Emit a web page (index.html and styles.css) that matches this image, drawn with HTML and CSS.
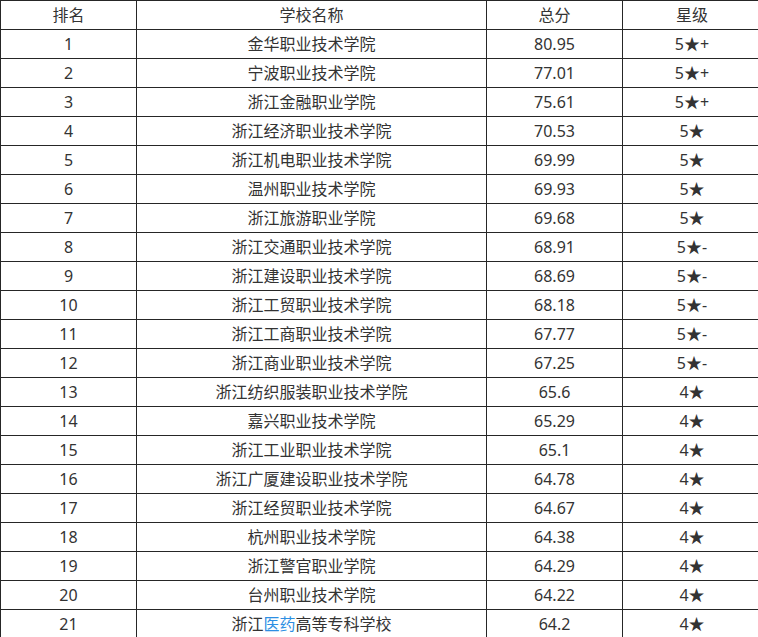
FILE: index.html
```html
<!DOCTYPE html>
<html lang="zh-CN">
<head>
<meta charset="utf-8">
<title>排名</title>
<link rel="stylesheet" href="styles.css">
</head>
<body>
<table class="rank-table">
  <colgroup>
    <col class="c-rank">
    <col class="c-name">
    <col class="c-score">
    <col class="c-star">
  </colgroup>
  <thead>
    <tr><th>排名</th><th>学校名称</th><th>总分</th><th>星级</th></tr>
  </thead>
  <tbody>
    <tr><td>1</td><td>金华职业技术学院</td><td>80.95</td><td>5★+</td></tr>
    <tr><td>2</td><td>宁波职业技术学院</td><td>77.01</td><td>5★+</td></tr>
    <tr><td>3</td><td>浙江金融职业学院</td><td>75.61</td><td>5★+</td></tr>
    <tr><td>4</td><td>浙江经济职业技术学院</td><td>70.53</td><td>5★</td></tr>
    <tr><td>5</td><td>浙江机电职业技术学院</td><td>69.99</td><td>5★</td></tr>
    <tr><td>6</td><td>温州职业技术学院</td><td>69.93</td><td>5★</td></tr>
    <tr><td>7</td><td>浙江旅游职业学院</td><td>69.68</td><td>5★</td></tr>
    <tr><td>8</td><td>浙江交通职业技术学院</td><td>68.91</td><td>5★-</td></tr>
    <tr><td>9</td><td>浙江建设职业技术学院</td><td>68.69</td><td>5★-</td></tr>
    <tr><td>10</td><td>浙江工贸职业技术学院</td><td>68.18</td><td>5★-</td></tr>
    <tr><td>11</td><td>浙江工商职业技术学院</td><td>67.77</td><td>5★-</td></tr>
    <tr><td>12</td><td>浙江商业职业技术学院</td><td>67.25</td><td>5★-</td></tr>
    <tr><td>13</td><td>浙江纺织服装职业技术学院</td><td>65.6</td><td>4★</td></tr>
    <tr><td>14</td><td>嘉兴职业技术学院</td><td>65.29</td><td>4★</td></tr>
    <tr><td>15</td><td>浙江工业职业技术学院</td><td>65.1</td><td>4★</td></tr>
    <tr><td>16</td><td>浙江广厦建设职业技术学院</td><td>64.78</td><td>4★</td></tr>
    <tr><td>17</td><td>浙江经贸职业技术学院</td><td>64.67</td><td>4★</td></tr>
    <tr><td>18</td><td>杭州职业技术学院</td><td>64.38</td><td>4★</td></tr>
    <tr><td>19</td><td>浙江警官职业学院</td><td>64.29</td><td>4★</td></tr>
    <tr><td>20</td><td>台州职业技术学院</td><td>64.22</td><td>4★</td></tr>
    <tr><td>21</td><td>浙江<a class="kw" href="#">医药</a>高等专科学校</td><td>64.2</td><td>4★</td></tr>
  </tbody>
</table>
</body>
</html>
```

FILE: styles.css
```css
html, body {
  margin: 0;
  padding: 0;
  background: #ffffff;
  overflow: hidden;
}

.rank-table {
  border-collapse: collapse;
  table-layout: fixed;
  width: 761px;
  font-family: "Noto Sans", "Noto Sans CJK SC", "DejaVu Sans", sans-serif;
  font-size: 16px;
  color: #333333;
}

.c-rank { width: 136px; }
.c-name { width: 350px; }
.c-score { width: 136px; }
.c-star { width: 139px; }

.rank-table th,
.rank-table td {
  border: 1px solid #262626;
  height: 28px;
  padding: 0;
  line-height: 28px;
  text-align: center;
  font-weight: normal;
  white-space: nowrap;
  overflow: hidden;
}

.kw {
  color: #2d8fe3;
  text-decoration: none;
}
```
